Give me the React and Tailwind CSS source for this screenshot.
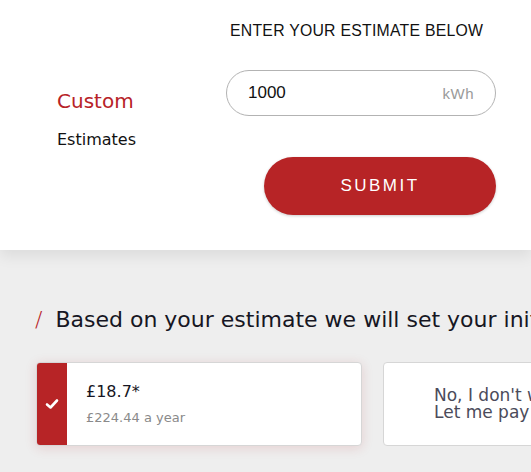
import React from "react";

const mont = { fontFamily: '"DejaVu Sans", "Open Sans", sans-serif' };
const arial = { fontFamily: '"Liberation Sans", Arial, sans-serif' };

export default function App() {
  return (
    <div className="w-[531px] h-[472px] overflow-hidden bg-[#eeeeee] relative" style={mont}>
      <div className="bg-white h-[250px] shadow-[0_6px_14px_rgba(0,0,0,0.08)] relative z-10 flex">
        <div className="w-[226px] pl-[57px] pt-[86px] shrink-0">
          <div className="text-[20px] leading-[30px] text-[#b72227]">Custom</div>
          <div className="text-[16px] leading-[20px] text-[#111] mt-[14px]">Estimates</div>
        </div>
        <div className="w-[270px] flex flex-col">
          <div className="pt-[21px] pl-[4px] text-[15.8px] leading-[20px] text-[#111] tracking-[0.25px]" style={arial}>
            ENTER YOUR ESTIMATE BELOW
          </div>
          <div className="mt-[29px] h-[46px] rounded-full border border-[#b3b3b3] flex items-center justify-between pl-[21px] pr-[21px]" style={arial}>
            <span className="text-[17px] text-[#111]">1000</span>
            <span className="text-[15px] text-[#9a9a9a] tracking-[0.5px] pt-[3px]">kWh</span>
          </div>
          <div className="flex justify-end mt-[41px]">
            <button className="w-[232px] h-[58px] rounded-full bg-[#b72426] text-white text-[17px] tracking-[2.5px] shadow-[0_1px_3px_rgba(0,0,0,0.2)]" style={arial}>
              SUBMIT
            </button>
          </div>
        </div>
      </div>

      <div className="pt-[55px] pl-[35px] flex items-center whitespace-nowrap">
        <span className="text-[22px] text-[#b72227] mr-[13px] leading-[30px] font-light">/</span>
        <span className="text-[22px] text-[#161623] leading-[30px]">Based on your estimate we will set your initial monthly payment</span>
      </div>

      <div className="flex gap-[21px] pl-[36px] mt-[27px]">
        <div className="w-[326px] h-[84px] shrink-0 rounded-[4px] bg-white border border-[#d6d6d6] shadow-[0_2px_12px_rgba(183,36,38,0.15)] flex overflow-hidden">
          <div className="w-[30px] bg-[#b72426] flex items-center justify-center">
            <svg width="14" height="12" viewBox="0 0 14 12" fill="none">
              <path d="M2 6.5 L5.5 9.5 L12 2.5" stroke="white" strokeWidth="2.6" strokeLinecap="round" strokeLinejoin="round" />
            </svg>
          </div>
          <div className="pl-[19px] pt-[18px]">
            <div className="text-[16px] leading-[22px] text-[#161623]">£18.7*</div>
            <div className="text-[13px] leading-[20px] text-[#8a8a8a] mt-[5px]">£224.44 a year</div>
          </div>
        </div>
        <div className="w-[326px] h-[84px] shrink-0 rounded-[4px] bg-white border border-[#d6d6d6] pl-[50px] pt-[24px]">
          <div className="text-[17px] leading-[17px] text-[#4b4b5a] whitespace-nowrap">No, I don't want to pay this amount</div>
          <div className="text-[17px] leading-[17px] text-[#4b4b5a] whitespace-nowrap">Let me pay what I choose</div>
        </div>
      </div>
    </div>
  );
}
